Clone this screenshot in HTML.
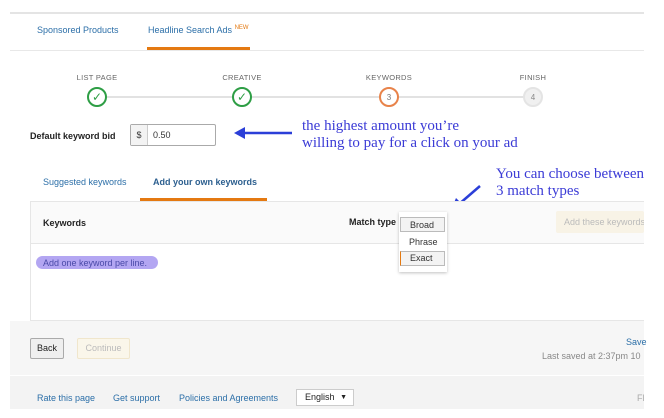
<!DOCTYPE html><html><head><style>
body{margin:0;width:664px;height:418px;background:#fff;font-family:"Liberation Sans",sans-serif;position:relative;overflow:hidden;font-size:9px;color:#333}
.a{position:absolute;white-space:nowrap}
.blue{color:#2c6fa8}
.hand{font-family:"Liberation Serif",serif;color:#3b3bd6;font-size:15px;line-height:17px}
.circ{position:absolute;width:20px;height:20px;border-radius:50%;box-sizing:border-box;text-align:center;line-height:18px;font-size:8px}
.lbl{position:absolute;font-size:7.5px;color:#666;letter-spacing:.3px;transform:translateX(-50%)}
</style></head><body>
<div class="a" style="left:10px;top:12px;width:634px;height:2px;background:#e4e4e4"></div>
<div class="a blue" style="left:37px;top:25px;font-size:9px">Sponsored Products</div>
<div class="a blue" style="left:148px;top:25px;font-size:9px">Headline Search Ads <sup style="color:#e47911;font-size:6px">NEW</sup></div>
<div class="a" style="left:147px;top:47px;width:103px;height:3px;background:#e47911"></div>
<div class="a" style="left:10px;top:50px;width:634px;height:1px;background:#e8e8e8"></div>
<div class="a" style="left:97px;top:96px;width:436px;height:2px;background:#e2e2e2"></div>
<div class="lbl" style="left:97px;top:73px">LIST PAGE</div>
<div class="lbl" style="left:242px;top:73px">CREATIVE</div>
<div class="lbl" style="left:389px;top:73px">KEYWORDS</div>
<div class="lbl" style="left:533px;top:73px">FINISH</div>
<div class="circ" style="left:87px;top:87px;border:2px solid #2e9e45;background:#fff;color:#2e9e45;font-size:12px;line-height:16px">✓</div>
<div class="circ" style="left:232px;top:87px;border:2px solid #2e9e45;background:#fff;color:#2e9e45;font-size:12px;line-height:16px">✓</div>
<div class="circ" style="left:379px;top:87px;border:2px solid #e8834a;background:#fff;color:#777">3</div>
<div class="circ" style="left:523px;top:87px;border:2px solid #e4e4e4;background:#f0f0f0;color:#888">4</div>
<div class="a" style="left:30px;top:131px;font-weight:bold;color:#222">Default keyword bid</div>
<div class="a" style="left:130px;top:124px;width:84px;height:20px;border:1px solid #aaa;border-radius:2px;background:#fff"></div>
<div class="a" style="left:131px;top:125px;width:16px;height:20px;background:#f3f3f3;border-right:1px solid #ccc;text-align:center;line-height:20px">$</div>
<div class="a" style="left:153px;top:130px">0.50</div>
<svg class="a" style="left:232px;top:126px" width="62" height="14"><path d="M60 7H10" stroke="#2b3fd8" stroke-width="2.5"/><path d="M2 7L13 1V13Z" fill="#2b3fd8"/></svg>
<div class="a hand" style="left:302px;top:118px">the highest amount you’re<br>willing to pay for a click on your ad</div>
<div class="a blue" style="left:43px;top:177px">Suggested keywords</div>
<div class="a" style="left:153px;top:177px;font-weight:bold;color:#2c5f8f">Add your own keywords</div>
<div class="a" style="left:140px;top:198px;width:127px;height:3px;background:#e47911"></div>
<div class="a hand" style="left:496px;top:166px">You can choose between<br>3 match types</div>
<svg class="a" style="left:448px;top:184px" width="34" height="28"><path d="M32 2L10 21" stroke="#2b3fd8" stroke-width="2.5"/><path d="M3 26L8 14L16 22Z" fill="#2b3fd8"/></svg>
<div class="a" style="left:30px;top:201px;width:614px;height:120px;border:1px solid #e6e6e6;border-right:none;box-sizing:border-box;background:#fff"></div>
<div class="a" style="left:31px;top:202px;width:613px;height:41px;background:#fafafa;border-bottom:1px solid #e6e6e6"></div>
<div class="a" style="left:43px;top:218px;font-weight:bold;color:#222">Keywords</div>
<div class="a" style="left:349px;top:217px;font-weight:bold;color:#222">Match type</div>
<div class="a" style="left:399px;top:212px;width:48px;height:60px;background:#fff;box-shadow:0 1px 3px rgba(0,0,0,.25)"></div>
<div class="a" style="left:400px;top:217px;width:45px;height:15px;border:1px solid #bbb;background:#f3f3f3;line-height:15px;padding-left:9px;box-sizing:border-box">Broad</div>
<div class="a" style="left:409px;top:237px">Phrase</div>
<div class="a" style="left:400px;top:251px;width:45px;height:15px;border:1px solid #bbb;border-left:1px solid #e47911;background:#f3f3f3;line-height:13px;padding-left:9px;box-sizing:border-box">Exact</div>
<div class="a" style="left:556px;top:211px;width:88px;height:22px;background:#f8f3e6;border-radius:2px;color:#bbb;line-height:22px;padding-left:8px;box-sizing:border-box;overflow:hidden">Add these keywords</div>
<div class="a" style="left:36px;top:256px;width:122px;height:13px;background:#b3a6f2;border-radius:7px"></div>
<div class="a" style="left:43px;top:258px;color:#4a4aa8">Add one keyword per line.</div>
<div class="a" style="left:10px;top:321px;width:634px;height:54px;background:#f6f6f6"></div>
<div class="a" style="left:30px;top:338px;width:34px;height:21px;border:1px solid #aaa;border-radius:2px;background:#efefef;box-sizing:border-box;text-align:center;line-height:19px;color:#222">Back</div>
<div class="a" style="left:77px;top:338px;width:53px;height:21px;border:1px solid #f0e6cc;border-radius:2px;background:#faf6ea;box-sizing:border-box;text-align:center;line-height:19px;color:#bbb">Continue</div>
<div class="a blue" style="left:626px;top:337px">Save</div>
<div class="a" style="left:542px;top:351px;color:#888">Last saved at 2:37pm 10</div>
<div class="a" style="left:10px;top:376px;width:634px;height:33px;background:#f3f3f3"></div>
<div class="a blue" style="left:37px;top:393px">Rate this page</div>
<div class="a blue" style="left:113px;top:393px">Get support</div>
<div class="a blue" style="left:179px;top:393px">Policies and Agreements</div>
<div class="a" style="left:296px;top:389px;width:58px;height:17px;border:1px solid #ccc;background:#fff;box-sizing:border-box;line-height:15px;padding-left:8px;color:#222">English <span style="position:absolute;right:6px;font-size:7px">▼</span></div>
<div class="a" style="left:637px;top:393px;color:#aaa">Fl</div>
</body></html>
